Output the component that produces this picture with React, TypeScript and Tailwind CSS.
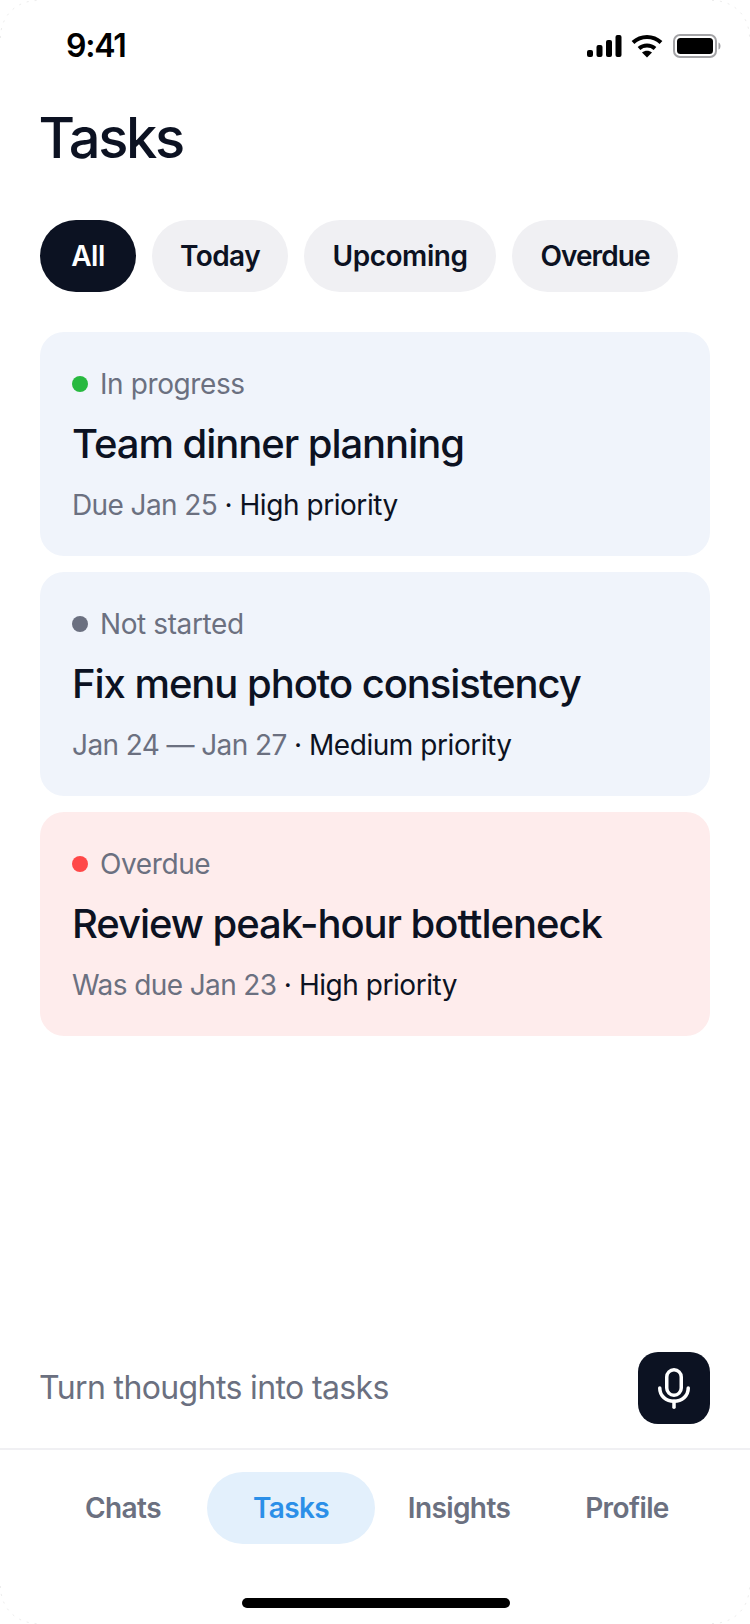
import React from "react";

const ink = "text-[#0c1222]";

function Card({ dot, status, title, date, priority, bg }: { dot: string; status: string; title: string; date: string; priority: string; bg: string }) {
  return (
    <div className={`h-[224px] rounded-[24px] px-[32px] pt-[33px] ${bg}`}>
      <div className="flex h-[38px] items-center gap-[12px] text-[28px] leading-[38px] tracking-[-0.4px] text-[#6b7080]">
        <span className={`h-[16px] w-[16px] shrink-0 rounded-full ${dot}`} />
        <span>{status}</span>
      </div>
      <div className={`mt-[15px] text-[40px] font-medium leading-[52px] tracking-[-1.05px] ${ink}`}>{title}</div>
      <div className="mt-[16px] text-[28px] leading-[38px] tracking-[-0.6px] text-[#6b7080]">
        {date} <span className={`tracking-[-0.45px] ${ink}`}>· {priority}</span>
      </div>
    </div>
  );
}

function Chip({ label, width, active }: { label: string; width: string; active?: boolean }) {
  return (
    <div className={`flex h-[72px] items-center justify-center rounded-[36px] text-[28px] font-semibold ${width} ${active ? "bg-[#0c1222] text-white" : `bg-[#f0f0f3] ${ink}`}`}>
      {label}
    </div>
  );
}

function Tab({ label, active }: { label: string; active?: boolean }) {
  return (
    <div className={`flex h-[72px] w-[168px] items-center justify-center rounded-[36px] text-[28px] font-semibold tracking-[-0.6px] ${active ? "bg-[#e3f0fc] text-[#2b8fe8]" : "text-[#6b7080]"}`}>
      {label}
    </div>
  );
}

export default function App() {
  return (
    <div className="relative flex h-[1624px] w-[750px] flex-col overflow-hidden bg-white font-['Inter',sans-serif]">
      <svg className="pointer-events-none absolute left-0 top-0" width="750" height="1624" viewBox="0 0 750 1624" fill="none" stroke="#ededed" strokeWidth="1" strokeDasharray="2 6">
        <path d="M0.5 38 C0.5 16 16 0.5 38 0.5" />
        <path d="M712 0.5 C734 0.5 749.5 16 749.5 38" />
        <path d="M0.5 1586 C0.5 1608 16 1623.5 38 1623.5" />
        <path d="M712 1623.5 C734 1623.5 749.5 1608 749.5 1586" />
      </svg>
      <div className="flex h-[90px] shrink-0 items-center justify-between pl-[66px] pr-[29px] pt-[2px]">
        <span className="text-[32px] font-semibold leading-none tracking-[-1.2px] text-black">9:41</span>
        <div className="flex items-center">
          <svg width="35" height="22" viewBox="0 0 35 22" fill="black">
            <rect x="0" y="15" width="6" height="7" rx="2" />
            <rect x="9.5" y="10" width="6" height="12" rx="2" />
            <rect x="19" y="5" width="6" height="17" rx="2" />
            <rect x="28.5" y="0" width="6" height="22" rx="2" />
          </svg>
          <svg className="ml-[9px]" width="32" height="24" viewBox="0 0 32 24" fill="none" stroke="black" strokeWidth="4">
            <path d="M2 8.5 C10 1 22 1 30 8.5" />
            <path d="M8 14.5 C12.5 10.5 19.5 10.5 24 14.5" />
            <path d="M16 23.5 L11 18.5 C14 16 18 16 21 18.5 Z" fill="black" stroke="none" />
          </svg>
          <svg className="ml-[10px]" width="48" height="24" viewBox="0 0 48 24" fill="none">
            <rect x="1" y="1" width="42" height="22" rx="6" stroke="#a3a3a6" strokeWidth="2" />
            <rect x="4" y="4" width="36" height="16" rx="3.5" fill="black" />
            <path d="M45.5 8.5 C47 9 47.5 10.5 47.5 12 C47.5 13.5 47 15 45.5 15.5 Z" fill="#a3a3a6" />
          </svg>
        </div>
      </div>

      <div className="flex flex-1 flex-col px-[40px]">
        <h1 className={`mt-[14px] -ml-[1.5px] text-[56px] font-medium leading-[68px] tracking-[-2.3px] ${ink}`}>Tasks</h1>
        <div className="mt-[48px] flex gap-[16px]">
          <Chip label="All" width="w-[96px] tracking-[-0.55px]" active />
          <Chip label="Today" width="w-[136px] tracking-[-0.55px]" />
          <Chip label="Upcoming" width="w-[192px] tracking-[-0.45px]" />
          <Chip label="Overdue" width="w-[166px] tracking-[-0.95px]" />
        </div>
        <div className="mt-[40px] flex flex-col gap-[16px]">
          <Card dot="bg-[#28b940]" status="In progress" title="Team dinner planning" date="Due Jan 25" priority="High priority" bg="bg-[#f0f4fb]" />
          <Card dot="bg-[#6b7080]" status="Not started" title="Fix menu photo consistency" date="Jan 24 — Jan 27" priority="Medium priority" bg="bg-[#f0f4fb]" />
          <Card dot="bg-[#ff4848]" status="Overdue" title="Review peak-hour bottleneck" date="Was due Jan 23" priority="High priority" bg="bg-[#feecec]" />
        </div>
        <div className="mt-auto flex h-[72px] items-center justify-between">
          <span className="-ml-[1px] text-[32px] tracking-[-0.62px] text-[#6b7080]">Turn thoughts into tasks</span>
          <div className="flex h-[72px] w-[72px] items-center justify-center rounded-[20px] bg-[#0c1222]">
            <svg width="40" height="44" viewBox="0 0 40 44" fill="none" stroke="white" strokeWidth="3.5" strokeLinecap="round">
              <rect x="12.75" y="3.75" width="14.5" height="25.5" rx="7.25" />
              <path d="M5.75 22 C5.75 30 12 35.25 20 35.25 C28 35.25 34.25 30 34.25 22" />
              <path d="M20 35.25 V41.25" />
            </svg>
          </div>
        </div>
      </div>

      <div className="mt-[24px] h-[176px] shrink-0 border-t-2 border-[#f0f0f3]">
        <div className="mt-[22px] flex justify-center gap-0">
          <Tab label="Chats" />
          <Tab label="Tasks" active />
          <Tab label="Insights" />
          <Tab label="Profile" />
        </div>
        <div className="ml-[242px] mt-[54px] h-[10px] w-[268px] rounded-full bg-black" />
      </div>
    </div>
  );
}
